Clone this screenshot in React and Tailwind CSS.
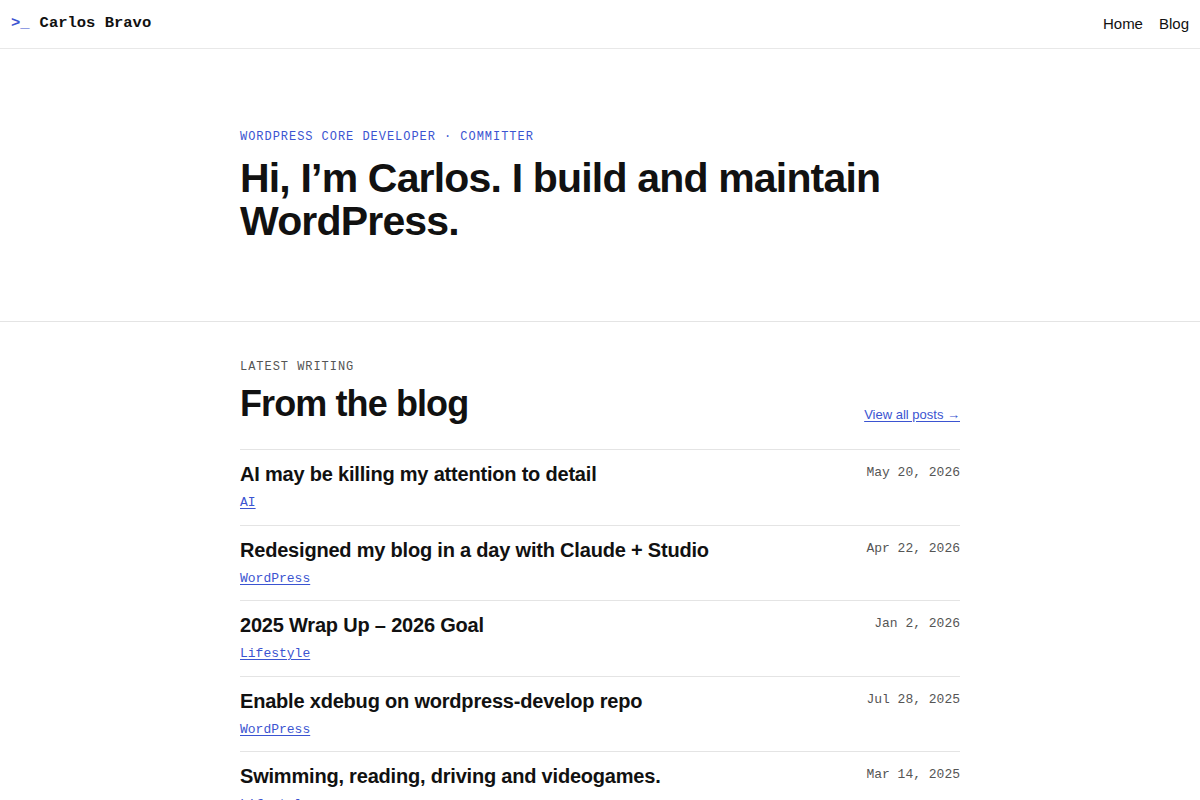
const posts = [
  { title: 'AI may be killing my attention to detail', tag: 'AI', date: 'May 20, 2026' },
  { title: 'Redesigned my blog in a day with Claude + Studio', tag: 'WordPress', date: 'Apr 22, 2026' },
  { title: '2025 Wrap Up – 2026 Goal', tag: 'Lifestyle', date: 'Jan 2, 2026' },
  { title: 'Enable xdebug on wordpress-develop repo', tag: 'WordPress', date: 'Jul 28, 2025' },
  { title: 'Swimming, reading, driving and videogames.', tag: 'Lifestyle', date: 'Mar 14, 2025' },
];

const sans = "font-['Liberation_Sans',Arial,sans-serif]";
const mono = "font-['Liberation_Mono','Courier_New',monospace]";

export default function App() {
  return (
    <div className={`min-h-screen bg-white text-[#111111] ${sans}`}>
      {/* Header */}
      <header className="h-[49px] flex items-center justify-between px-[11px] border-b border-[#e8e8e8]">
        <a href="#" className={`flex items-center gap-[10px] ${mono} text-[15.5px] font-bold`}>
          <span className="text-[#3b54d1]">&gt;_</span>
          <span>Carlos Bravo</span>
        </a>
        <nav className="flex items-center gap-4 text-[15px] text-[#111111]">
          <a href="#">Home</a>
          <a href="#">Blog</a>
        </nav>
      </header>

      {/* Hero */}
      <section className="border-b border-[#e4e4e4]">
        <div className="w-[720px] mx-auto pt-[80px] pb-[78px]">
          <p className={`${mono} text-[12px] tracking-[0.08em] text-[#3b54d1] uppercase leading-4`}>
            WordPress Core Developer · Committer
          </p>
          <h1 className="mt-[12px] text-[41px] font-bold leading-[43px] tracking-[-0.02em]">
            Hi, I’m Carlos. I build and maintain WordPress.
          </h1>
        </div>
      </section>

      {/* Blog */}
      <section>
        <div className="w-[720px] mx-auto pt-[37px]">
          <p className={`${mono} text-[12px] tracking-[0.08em] text-[#555555] uppercase leading-4`}>
            Latest writing
          </p>
          <div className="flex items-end justify-between mt-[7px] pb-[23px] border-b border-[#e4e4e4]">
            <h2 className="text-[36px] font-bold leading-[44px] tracking-[-0.025em]">From the blog</h2>
            <a href="#" className="text-[13px] text-[#3b54d1] underline underline-offset-2 leading-4 mb-[3px]">
              View all posts →
            </a>
          </div>
          <ul>
            {posts.map((p) => (
              <li key={p.title} className="flex justify-between border-b border-[#e4e4e4] h-[75.5px] pt-[11px]">
                <div>
                  <h3 className="text-[20px] font-bold leading-[26px] tracking-[-0.01em]">{p.title}</h3>
                  <a
                    href="#"
                    className={`inline-block mt-[6px] ${mono} text-[13px] text-[#3b54d1] underline underline-offset-2 leading-5`}
                  >
                    {p.tag}
                  </a>
                </div>
                <span className={`${mono} text-[13px] text-[#555555] leading-4 pt-[4px]`}>{p.date}</span>
              </li>
            ))}
          </ul>
        </div>
      </section>
    </div>
  );
}
